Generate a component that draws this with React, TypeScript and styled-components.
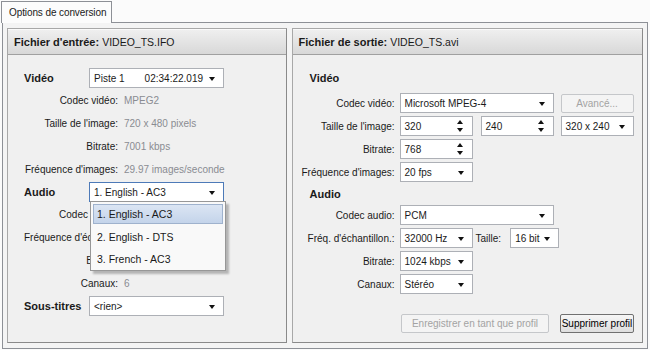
import React from "react";
import styled, { createGlobalStyle } from "styled-components";

const GlobalStyle = createGlobalStyle`
  html, body {
    margin: 0;
    padding: 0;
    background: #fbfbfb;
  }
  body {
    font-family: "Liberation Sans", Arial, sans-serif;
    font-size: 10px;
    color: #1a1a1a;
  }
`;

const Window = styled.div`
  width: 650px;
  height: 350px;
  box-sizing: border-box;
  padding-top: 1px;
  background: #fbfbfb;
  overflow: hidden;
`;

const TabStrip = styled.div`
  display: flex;
  height: 21px;
  padding-left: 1px;
`;

const Tab = styled.div`
  position: relative;
  z-index: 1;
  width: 111px;
  height: 22px;
  box-sizing: border-box;
  padding-left: 7px;
  display: flex;
  align-items: center;
  border: 1px solid #8d9096;
  border-bottom: none;
  background: #fcfcfc;
  font-size: 10px;
  letter-spacing: -0.1px;
  white-space: nowrap;
`;

const TabPage = styled.div`
  margin-left: 2px;
  width: 646px;
  height: 327px;
  box-sizing: border-box;
  border: 1px solid #8d9096;
  background: #f4f4f4;
  padding: 5px 4px;
  display: flex;
  gap: 5px;
`;

const Panel = styled.div<{ $w: number }>`
  width: ${({ $w }) => $w}px;
  height: 315px;
  box-sizing: border-box;
  border: 1px solid;
  border-color: #a8a8a8 #8a8a8a #8a8a8a #a8a8a8;
  background: #f0f0f0;
  display: flex;
  flex-direction: column;
`;

const PanelHeader = styled.div`
  height: 26px;
  box-sizing: border-box;
  padding-left: 6px;
  display: flex;
  align-items: center;
  border-bottom: 1px solid #a0a0a0;
  border-top: 1px solid #fafafa;
  background: linear-gradient(#efefef, #d8d8d8);
  font-size: 10.5px;
  white-space: nowrap;

  b {
    font-size: 11px;
    margin-right: 3px;
  }
`;

/* ---------- input panel ---------- */

const LeftBody = styled.div`
  padding: 12px 0 0 16px;
`;

const HeadRow = styled.div`
  display: flex;
  align-items: center;
  height: 22px;
`;

const HeadLabel = styled.div`
  width: 65px;
  font-weight: bold;
  font-size: 11px;
`;

const InfoRow = styled.div`
  display: flex;
  align-items: center;
  height: 23px;
`;

const InfoLabel = styled.div`
  width: 94px;
  margin-right: 6px;
  text-align: right;
  white-space: nowrap;
`;

const InfoValue = styled.div`
  color: #8a8c92;
  white-space: nowrap;
`;

/* ---------- fields ---------- */

const Field = styled.div<{ $w: number; $focus?: boolean }>`
  position: relative;
  width: ${({ $w }) => $w}px;
  height: 20px;
  box-sizing: border-box;
  border: 1px solid ${({ $focus }) => ($focus ? "#4d7ab8" : "#adb0b6")};
  background: #fff;
  padding: 0 20px 0 4px;
  display: flex;
  align-items: center;
  justify-content: space-between;
  white-space: nowrap;
  flex-shrink: 0;
`;

const SelectBox = styled(Field)`
  &::after {
    content: "";
    position: absolute;
    right: 8px;
    top: 8px;
    border-left: 3.5px solid transparent;
    border-right: 3.5px solid transparent;
    border-top: 4px solid #111;
  }
`;

const SpinBox = styled(Field)`
  &::before,
  &::after {
    content: "";
    position: absolute;
    right: 9px;
    border-left: 3.5px solid transparent;
    border-right: 3.5px solid transparent;
  }
  &::before {
    top: 3px;
    border-bottom: 4px solid #111;
  }
  &::after {
    bottom: 3px;
    border-top: 4px solid #111;
  }
`;

const DropWrap = styled.div`
  position: relative;
`;

const DropList = styled.div`
  position: absolute;
  z-index: 5;
  left: 1px;
  top: 19px;
  width: 136px;
  box-sizing: border-box;
  padding: 2px 2px 1px;
  border: 1px solid #979797;
  background: #f9f9f9;
  box-shadow: 3px 3px 2px rgba(0, 0, 0, 0.25);
`;

const DropItem = styled.div<{ $active?: boolean }>`
  height: 20px;
  box-sizing: border-box;
  margin-bottom: 2.5px;
  padding-left: 3px;
  display: flex;
  align-items: center;
  font-size: 10.5px;
  border: 1px solid ${({ $active }) => ($active ? "#9fb2cd" : "transparent")};
  background: ${({ $active }) =>
    $active ? "linear-gradient(#dbe5f3, #c4d4ea)" : "transparent"};
  &:last-child {
    margin-bottom: 0;
  }
`;

/* ---------- output panel ---------- */

const RightBody = styled.div`
  padding-top: 11px;
  display: flex;
  flex-direction: column;
  gap: 3px;
`;

const SectionTitle = styled.div<{ $h: number }>`
  height: ${({ $h }) => $h}px;
  padding-left: 17px;
  display: flex;
  align-items: center;
  font-weight: bold;
  font-size: 11px;
`;

const FormRow = styled.div`
  display: flex;
  align-items: center;
  height: 20px;
`;

const FormLabel = styled.div`
  width: 102px;
  margin-right: 5px;
  text-align: right;
  white-space: nowrap;
`;

const Fields = styled.div<{ $gap?: number }>`
  display: flex;
  align-items: center;
  gap: ${({ $gap }) => $gap ?? 7}px;
`;

const InlineLabel = styled.span`
  margin: 0 2px 0 -4px;
  white-space: nowrap;
`;

const Button = styled.button<{ $w: number }>`
  width: ${({ $w }) => $w}px;
  height: 19px;
  padding: 0;
  font-family: inherit;
  font-size: 10px;
  white-space: nowrap;
  border-radius: 2px;
  border: 1px solid ${({ disabled }) => (disabled ? "#c5c7ca" : "#707070")};
  background: ${({ disabled }) =>
    disabled ? "#f4f4f4" : "linear-gradient(#f6f6f6, #dedede)"};
  color: ${({ disabled }) => (disabled ? "#a3a3a3" : "#000")};
`;

const ButtonRow = styled.div`
  margin-top: 17px;
  padding-right: 8px;
  display: flex;
  justify-content: flex-end;
  gap: 11px;
`;

const inputInfo: [string, string][] = [
  ["Codec vidéo:", "MPEG2"],
  ["Taille de l'image:", "720 x 480 pixels"],
  ["Bitrate:", "7001 kbps"],
  ["Fréquence d'images:", "29.97 images/seconde"],
];

const audioInfo: [string, string][] = [
  ["Codec audio:", "AC3"],
  ["Fréquence d'échantillon.:", "48000 Hz"],
  ["Bitrate:", "448 kbps"],
  ["Canaux:", "6"],
];

const audioTracks = ["1. English - AC3", "2. English - DTS", "3. French - AC3"];

const App: React.FC = () => {
  return (
    <Window>
      <GlobalStyle />
      <TabStrip>
        <Tab>Options de conversion</Tab>
      </TabStrip>
      <TabPage>
        <Panel $w={280}>
          <PanelHeader>
            <b>Fichier d'entrée:</b>VIDEO_TS.IFO
          </PanelHeader>
          <LeftBody>
            <HeadRow>
              <HeadLabel>Vidéo</HeadLabel>
              <SelectBox $w={135}>
                <span>Piste 1</span>
                <span>02:34:22.019</span>
              </SelectBox>
            </HeadRow>
            {inputInfo.map(([label, value]) => (
              <InfoRow key={label}>
                <InfoLabel>{label}</InfoLabel>
                <InfoValue>{value}</InfoValue>
              </InfoRow>
            ))}
            <HeadRow>
              <HeadLabel>Audio</HeadLabel>
              <DropWrap>
                <SelectBox $w={135} $focus>
                  <span>1. English - AC3</span>
                </SelectBox>
                <DropList>
                  {audioTracks.map((t, i) => (
                    <DropItem key={t} $active={i === 0}>
                      {t}
                    </DropItem>
                  ))}
                </DropList>
              </DropWrap>
            </HeadRow>
            {audioInfo.map(([label, value]) => (
              <InfoRow key={label}>
                <InfoLabel>{label}</InfoLabel>
                <InfoValue>{value}</InfoValue>
              </InfoRow>
            ))}
            <HeadRow>
              <HeadLabel>Sous-titres</HeadLabel>
              <SelectBox $w={135}>
                <span>&lt;rien&gt;</span>
              </SelectBox>
            </HeadRow>
          </LeftBody>
        </Panel>

        <Panel $w={352}>
          <PanelHeader>
            <b>Fichier de sortie:</b>VIDEO_TS.avi
          </PanelHeader>
          <RightBody>
            <SectionTitle $h={24}>Vidéo</SectionTitle>
            <FormRow>
              <FormLabel>Codec vidéo:</FormLabel>
              <Fields>
                <SelectBox $w={154}>Microsoft MPEG-4</SelectBox>
                <Button $w={73} disabled>
                  Avancé...
                </Button>
              </Fields>
            </FormRow>
            <FormRow>
              <FormLabel>Taille de l'image:</FormLabel>
              <Fields>
                <Fields $gap={8}>
                  <SpinBox $w={73}>320</SpinBox>
                  <SpinBox $w={73}>240</SpinBox>
                </Fields>
                <SelectBox $w={73}>320 x 240</SelectBox>
              </Fields>
            </FormRow>
            <FormRow>
              <FormLabel>Bitrate:</FormLabel>
              <SpinBox $w={73}>768</SpinBox>
            </FormRow>
            <FormRow>
              <FormLabel>Fréquence d'images:</FormLabel>
              <SelectBox $w={73}>20 fps</SelectBox>
            </FormRow>
            <SectionTitle $h={17}>Audio</SectionTitle>
            <FormRow>
              <FormLabel>Codec audio:</FormLabel>
              <SelectBox $w={154}>PCM</SelectBox>
            </FormRow>
            <FormRow>
              <FormLabel>Fréq. d'échantillon.:</FormLabel>
              <Fields>
                <SelectBox $w={73}>32000 Hz</SelectBox>
                <InlineLabel>Taille:</InlineLabel>
                <SelectBox $w={49}>16 bit</SelectBox>
              </Fields>
            </FormRow>
            <FormRow>
              <FormLabel>Bitrate:</FormLabel>
              <SelectBox $w={73}>1024 kbps</SelectBox>
            </FormRow>
            <FormRow>
              <FormLabel>Canaux:</FormLabel>
              <SelectBox $w={73}>Stéréo</SelectBox>
            </FormRow>
            <ButtonRow>
              <Button $w={148} disabled>
                Enregistrer en tant que profil
              </Button>
              <Button $w={74}>Supprimer profil</Button>
            </ButtonRow>
          </RightBody>
        </Panel>
      </TabPage>
    </Window>
  );
};

export default App;
